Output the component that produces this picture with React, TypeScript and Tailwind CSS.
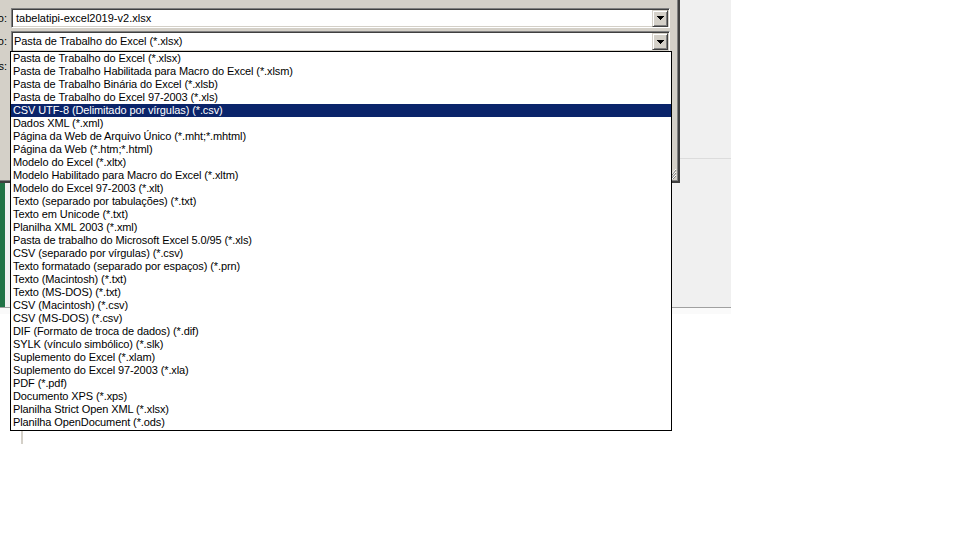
const formats = [
  'Pasta de Trabalho do Excel (*.xlsx)',
  'Pasta de Trabalho Habilitada para Macro do Excel (*.xlsm)',
  'Pasta de Trabalho Binária do Excel (*.xlsb)',
  'Pasta de Trabalho do Excel 97-2003 (*.xls)',
  'CSV UTF-8 (Delimitado por vírgulas) (*.csv)',
  'Dados XML (*.xml)',
  'Página da Web de Arquivo Único (*.mht;*.mhtml)',
  'Página da Web (*.htm;*.html)',
  'Modelo do Excel (*.xltx)',
  'Modelo Habilitado para Macro do Excel (*.xltm)',
  'Modelo do Excel 97-2003 (*.xlt)',
  'Texto (separado por tabulações) (*.txt)',
  'Texto em Unicode (*.txt)',
  'Planilha XML 2003 (*.xml)',
  'Pasta de trabalho do Microsoft Excel 5.0/95 (*.xls)',
  'CSV (separado por vírgulas) (*.csv)',
  'Texto formatado (separado por espaços) (*.prn)',
  'Texto (Macintosh) (*.txt)',
  'Texto (MS-DOS) (*.txt)',
  'CSV (Macintosh) (*.csv)',
  'CSV (MS-DOS) (*.csv)',
  'DIF (Formato de troca de dados) (*.dif)',
  'SYLK (vínculo simbólico) (*.slk)',
  'Suplemento do Excel (*.xlam)',
  'Suplemento do Excel 97-2003 (*.xla)',
  'PDF (*.pdf)',
  'Documento XPS (*.xps)',
  'Planilha Strict Open XML (*.xlsx)',
  'Planilha OpenDocument (*.ods)',
];

const selected = 4;

// botão de seta do combo, estilo clássico
const DropButton = () => (
  <div className="w-[16px] h-[17px] bg-[#d4d0c8] border border-t-[#d4d0c8] border-l-[#d4d0c8] border-b-[#404040] border-r-[#404040] shadow-[inset_1px_1px_0_#ffffff,inset_-1px_-1px_0_#808080] flex items-center justify-center">
    <svg width="7" height="4" viewBox="0 0 7 4">
      <path d="M0 0h7v1H0zM1 1h5v1H1zM2 2h3v1H2zM3 3h1v1H3z" fill="#000" />
    </svg>
  </div>
);

const Label = ({ text }: { text: string }) => (
  <div className="w-[7px] overflow-hidden flex justify-end shrink-0">
    <span className="whitespace-nowrap">{text}</span>
  </div>
);

export default function App() {
  return (
    <div
      className="relative w-[960px] h-[540px] bg-white overflow-hidden text-[11px] leading-[13px] text-black"
      style={{ fontFamily: '"Liberation Sans", Arial, sans-serif' }}
    >
      <div className="flex w-[731px]">
        {/* diálogo + planilha atrás */}
        <div className="w-[680px] flex flex-col">
          <div className="h-[183px] bg-[#d4d0c8] border-r-2 border-b-2 border-r-[#404040] border-b-[#404040] shadow-[inset_-1px_-1px_0_#808080] relative">
            <div className="flex flex-col pt-[8px] gap-[3px]">
              <div className="flex items-center gap-[4px]">
                <Label text="Nome do arquivo:" />
                <div className="w-[659px] h-[20px] bg-white border border-t-[#808080] border-l-[#808080] border-b-white border-r-white shadow-[inset_1px_1px_0_#404040,inset_-1px_-1px_0_#d4d0c8] flex items-center justify-between pl-[4px] pr-[1px]">
                  <span className="whitespace-nowrap">tabelatipi-excel2019-v2.xlsx</span>
                  <DropButton />
                </div>
              </div>
              <div className="flex items-center gap-[4px]">
                <Label text="Tipo:" />
                <div className="w-[659px] h-[21px] bg-white border border-t-[#808080] border-l-[#808080] border-b-white border-r-white shadow-[inset_1px_1px_0_#404040,inset_-1px_-1px_0_#d4d0c8] flex items-center justify-between pl-[2px] pr-[1px]">
                  <span className="whitespace-nowrap tracking-[-0.08px]">Pasta de Trabalho do Excel (*.xlsx)</span>
                  <DropButton />
                </div>
              </div>
              <div className="flex items-center gap-[4px] mt-[5px]">
                <Label text="Autores:" />
              </div>
            </div>
            {/* alça de redimensionar */}
            <svg className="absolute right-[1px] bottom-[1px]" width="10" height="12" viewBox="0 0 10 12">
              <path d="M9 1L1 11M9 4L3 11M9 7L5 11" stroke="#ffffff" strokeWidth="1" />
              <path d="M9 2L2 11M9 5L4 11M9 8L6 11" stroke="#808080" strokeWidth="1" />
            </svg>
          </div>
          <div className="h-[124px] flex">
            <div className="w-[5px] bg-[#217346]" />
            <div className="flex-1 bg-[#f0f0f0]" />
          </div>
        </div>
        {/* faixa da direita */}
        <div className="w-[51px] h-[307px] bg-[#f0f0f0] flex flex-col">
          <div className="h-[159px] border-b border-b-[#dcdcdc]" />
        </div>
      </div>
      <div className="w-[731px] h-[1px] bg-[#a0a0a0]" />
      <div className="w-[731px] h-[6px] bg-[#fafafa]" />

      {/* lista aberta do combo */}
      <div className="absolute left-[10px] top-[51px] w-[662px] h-[380px] bg-white border border-black tracking-[-0.1px]">
        {formats.map((f, i) => (
          <div
            key={f}
            className={
              i === selected
                ? 'h-[13px] pl-[2px] whitespace-nowrap bg-[#0a246a] text-white'
                : 'h-[13px] pl-[2px] whitespace-nowrap'
            }
          >
            {f}
          </div>
        ))}
      </div>

      <div className="absolute left-[21px] top-[431px] w-[2px] h-[13px] bg-[#d4d0c8]" />
    </div>
  );
}
